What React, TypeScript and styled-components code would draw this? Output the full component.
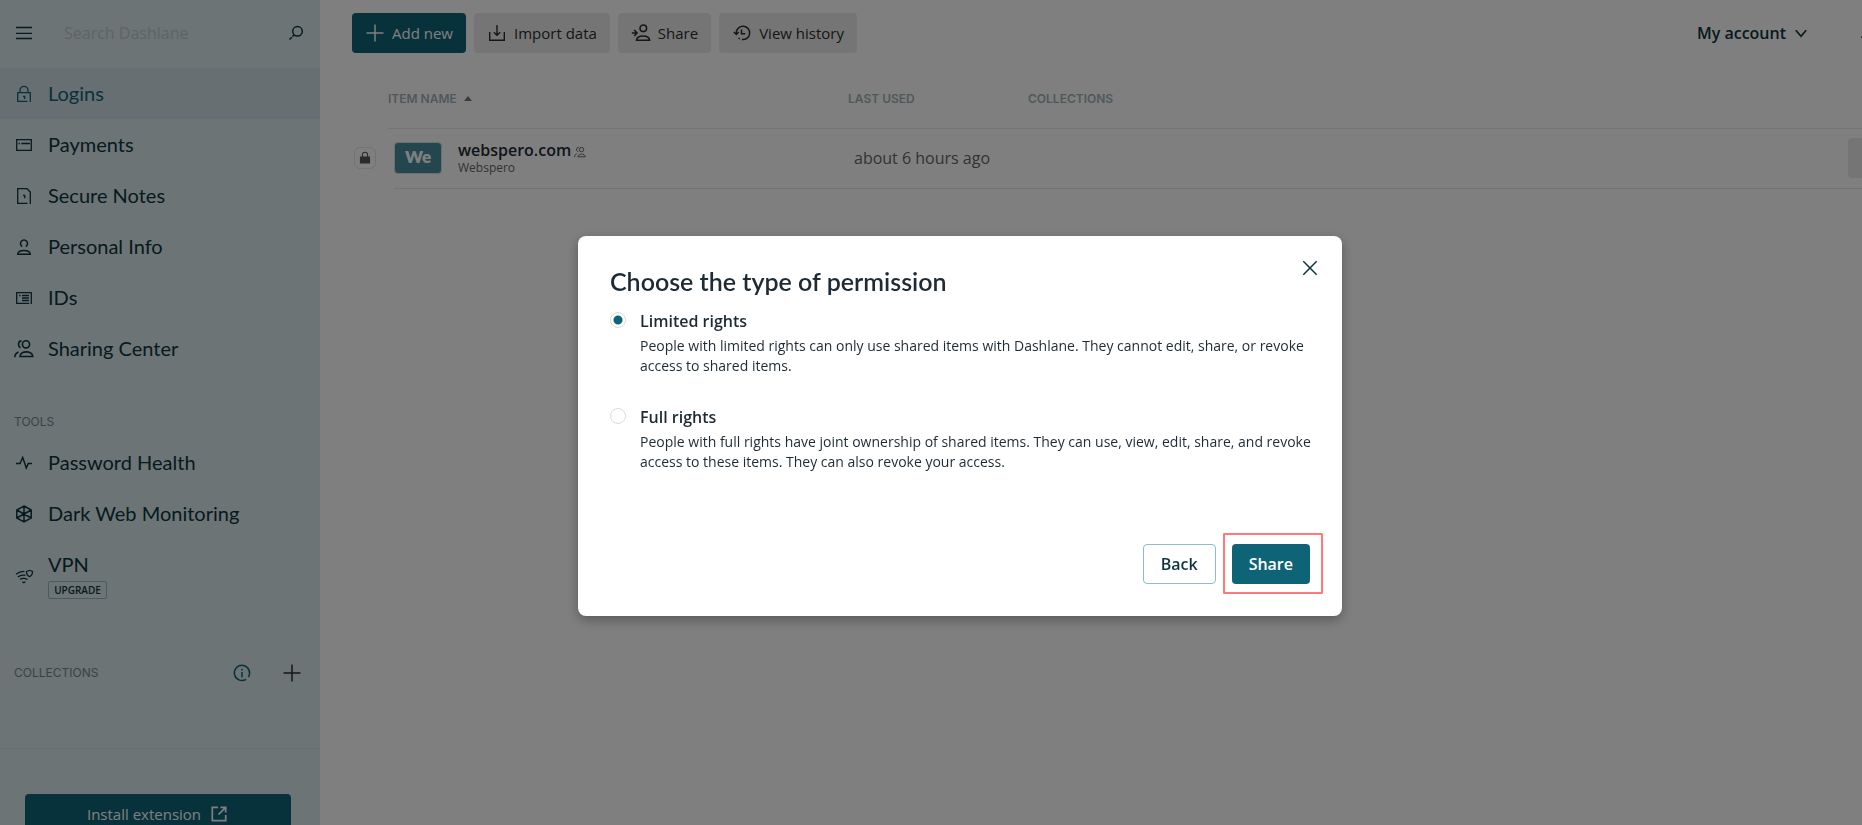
import React, { useState } from "react";
import styled, { createGlobalStyle, css } from "styled-components";

const body = '"Open Sans", "Noto Sans", sans-serif';
const display = 'Lato, "Open Sans", sans-serif';
const caps = 'Inter, "Liberation Sans", sans-serif';

const Global = createGlobalStyle`
  *, *::before, *::after { box-sizing: border-box; }
  html, body { margin: 0; height: 100%; overflow: hidden; }
  body { font-family: ${body}; color: #1e2b34; background: #fff; }
  button, input { font-family: inherit; margin: 0; }
  h2, p, ul { margin: 0; padding: 0; }
`;

/* The app canvas is slightly larger than the window and is clipped by it. */
const Shell = styled.div`
  display: flex;
  width: calc(100vw + 58px);
  min-height: calc(100vh + 27px);
`;

const Sidebar = styled.aside`
  flex: 0 0 320px;
  display: flex;
  flex-direction: column;
  background: #d8e8ea;
  color: #0e353d;
`;

const IconButton = styled.button`
  display: inline-flex;
  align-items: center;
  justify-content: center;
  width: 20px;
  height: 20px;
  padding: 0;
  border: 0;
  background: none;
  color: inherit;
  cursor: pointer;
`;

const InfoButton = styled(IconButton)`
  color: #0e6476;
`;

const SearchBar = styled.div`
  display: flex;
  align-items: center;
  height: 68px;
  padding: 0 14px 2px;
`;

const SearchInput = styled.input`
  flex: 1;
  min-width: 0;
  margin: 0 8px 0 30px;
  padding: 0;
  border: 0;
  outline: 0;
  background: none;
  font-size: 16px;
  line-height: 24px;
  color: #0e353d;
  &::placeholder { color: #bac8ca; opacity: 1; }
`;

const NavList = styled.ul`
  list-style: none;
`;

const NavLink = styled.a<{ $active?: boolean }>`
  display: flex;
  align-items: center;
  gap: 14px;
  min-height: 51px;
  padding: 13px 14px;
  font-family: ${display};
  font-size: 20px;
  line-height: 25px;
  text-decoration: none;
  color: ${(p) => (p.$active ? "#0e6476" : "#0e353d")};
  background: ${(p) => (p.$active ? "#cfdfe4" : "transparent")};
  svg { flex: none; }
`;

const Upgrade = styled.span`
  display: block;
  width: 59px;
  margin-top: 4px;
  border: 1px solid #8fb9bd;
  border-radius: 2px;
  font-family: ${body};
  font-size: 10px;
  font-weight: 600;
  line-height: 16px;
  text-align: center;
`;

const SectionTitle = styled.div`
  font-family: ${caps};
  font-size: 12px;
  line-height: 16px;
  color: #71878b;
`;

const ToolsTitle = styled(SectionTitle)`
  padding: 40px 14px 7px;
`;

const CollectionsHead = styled.div`
  display: flex;
  align-items: center;
  gap: 30px;
  height: 24px;
  margin: 49px 18px 63px 14px;
  color: #2d2d2d;
  ${SectionTitle} { flex: 1; }
`;

const SidebarFooter = styled.div`
  border-top: 1px solid #cfe0e3;
  padding: 45px 29px 18px 25px;
`;

const Button = styled.button<{ $kind: "primary" | "quiet" | "outline" }>`
  display: inline-flex;
  align-items: center;
  justify-content: center;
  height: 40px;
  gap: 7px;
  padding: 0 13px;
  border: 0;
  border-radius: 4px;
  font-size: 15px;
  font-weight: 500;
  line-height: 20px;
  white-space: nowrap;
  cursor: pointer;
  ${(p) => p.$kind === "primary" && css`background: #0e6476; color: #fff;`}
  ${(p) => p.$kind === "quiet" && css`background: #ebebeb; color: #2d2d2d;`}
  ${(p) => p.$kind === "outline" && css`background: #fff; color: #0e353d; border: 1px solid #92bcc5;`}
`;

const InstallButton = styled(Button)`
  width: 100%;
  gap: 8px;
`;

const DialogButton = styled(Button)`
  font-size: 16px;
  font-weight: 600;
  padding: 0 17px;
`;

const Main = styled.main`
  flex: 1;
  min-width: 0;
  padding: 13px 32px 0;
`;

const Toolbar = styled.div`
  display: flex;
  gap: 8px;
  align-items: center;
`;

const Account = styled.button`
  display: flex;
  align-items: center;
  gap: 5px;
  margin-left: auto;
  padding: 0;
  border: 0;
  background: none;
  font-size: 16px;
  font-weight: 600;
  line-height: 24px;
  color: #0e353d;
`;

const Bell = styled(IconButton)`
  margin: 0 7px 0 42px;
  color: #0e353d;
`;

const Table = styled.table`
  width: 100%;
  margin-top: 37px;
  border-collapse: collapse;
  table-layout: fixed;
`;

const Th = styled.th<{ $bare?: boolean }>`
  height: 38px;
  padding: 0 0 20px;
  text-align: left;
  vertical-align: middle;
  font-family: ${caps};
  font-size: 12px;
  font-weight: 600;
  line-height: 16px;
  color: #9fb1b5;
  border-bottom: ${(p) => (p.$bare ? "0" : "1px solid #e6e6e6")};
  svg { margin-left: 7px; vertical-align: 2px; color: #777; }
`;

const Td = styled.td<{ $bare?: boolean }>`
  height: 60px;
  padding: 0;
  vertical-align: middle;
  font-size: 16px;
  color: #666;
  border-bottom: ${(p) => (p.$bare ? "0" : "1px solid #e6e6e6")};
`;

const Used = styled.span`
  padding-left: 6px;
`;

const LockBox = styled.span`
  display: flex;
  align-items: center;
  justify-content: center;
  width: 22px;
  height: 22px;
  margin-left: 2px;
  border: 1px solid #e6e6e6;
  border-radius: 6px;
  color: #555;
`;

const Item = styled.div`
  display: flex;
  align-items: center;
  gap: 16px;
`;

const ItemText = styled.div`
  padding-top: 2px;
`;

const Thumb = styled.div`
  width: 48px;
  height: 32px;
  border: 1px solid #dcdcdc;
  border-radius: 4px;
  background: #488e9e;
  color: #fff;
  font-family: ${display};
  font-size: 17px;
  font-weight: 800;
  line-height: 28px;
  text-align: center;
`;

const ItemName = styled.div`
  display: flex;
  align-items: center;
  gap: 3px;
  font-size: 16px;
  font-weight: 600;
  line-height: 18px;
  color: #1e2b34;
  svg { margin-top: 4px; color: #555; }
`;

const ItemSub = styled.div`
  font-size: 12px;
  line-height: 18px;
  color: #666;
`;

const RowAction = styled.button`
  display: block;
  width: 40px;
  height: 40px;
  border: 0;
  border-radius: 4px;
  background: #ebebeb;
`;

const Overlay = styled.div`
  position: fixed;
  inset: 0 -58px -27px 0;
  display: flex;
  align-items: center;
  justify-content: center;
  background: rgba(0, 0, 0, 0.5);
`;

const Dialog = styled.section`
  position: relative;
  width: 764px;
  padding: 32px;
  border-radius: 8px;
  background: #fff;
  box-shadow: 0 4px 12px rgba(0, 0, 0, 0.3);
`;

const Close = styled(IconButton)`
  position: absolute;
  top: 22px;
  right: 22px;
  color: #0e353d;
`;

const Title = styled.h2`
  margin-bottom: 15px;
  font-family: ${display};
  font-size: 25px;
  font-weight: 600;
  line-height: 26px;
`;

const Options = styled.form`
  display: grid;
  gap: 29px;
  margin-right: -16px;
`;

const Option = styled.div`
  display: grid;
  grid-template-columns: 16px 1fr;
  column-gap: 14px;
  row-gap: 3px;
`;

const Radio = styled.input`
  appearance: none;
  width: 16px;
  height: 16px;
  margin: 3px 0 0;
  border: 1px solid #d5dfe0;
  border-radius: 50%;
  background: #fff;
  &:checked { background: radial-gradient(circle, #0e6476 0 4px, #fff 5px); }
`;

const OptionLabel = styled.label`
  font-size: 16px;
  font-weight: 600;
  line-height: 24px;
`;

const OptionText = styled.p`
  grid-column: 2;
  font-size: 14px;
  line-height: 20px;
`;

const Actions = styled.div`
  display: flex;
  justify-content: flex-end;
  gap: 16px;
  margin-top: 72px;
`;

const Highlighted = styled.div`
  position: relative;
  &::after {
    content: "";
    position: absolute;
    inset: -11px -13px -10px -9px;
    border: 2px solid #ff7b7b;
    border-radius: 1px;
    pointer-events: none;
  }
`;

const Svg = ({ size = 20, w = 1.5, children }: { size?: number; w?: number; children: React.ReactNode }) => (
  <svg width={size} height={size} viewBox="0 0 20 20" fill="none" stroke="currentColor" strokeWidth={w} aria-hidden="true">
    {children}
  </svg>
);

const icons = {
  menu: <Svg><path d="M2 4.5h16M2 10.3h16M2 15.5h16" strokeWidth="1.3" /></Svg>,
  search: <Svg><circle cx="11.5" cy="8.3" r="4.8" /><path d="M8 12l-1.600 1.600M5.800 14.200l-2.300 2.300" /></Svg>,
  lock: <Svg w={1.3}><path d="M16.300 18V8.700H3.700v8.600h9.800M6 8.500V6.300a4 4 0 0 1 8 0v2.200" /><path d="M9 12.500h1.700v2.500" /></Svg>,
  card: <Svg w={1.3}><path d="M2.700 4.700h14.600v10.600H2.700zM4.500 8.500h1.300M7.300 8.500h8.700" /></Svg>,
  note: <Svg w={1.3}><path d="M16.300 18V6l-3.300-3.300H3.700v14.600h9.800" /><path d="M9 9.300h1.700v3" /></Svg>,
  person: <Svg><path d="M8.200 9.500a3.500 3.500 0 1 1 3.600 0M3.700 17.300c.5-5 12-5 12.600 0z" /></Svg>,
  id: <Svg w={1.3}><path d="M17.300 16V4.700H2.700v10.600h12.500M5 7.500h1.500M8 7.500h7M8 10h7M8 12.500h7" /></Svg>,
  people: <Svg w={1.6}><circle cx="12" cy="5.300" r="3.600" /><path d="M6 17.500c.3-6.200 12.300-6.200 12.800 0zM7.500 1.900C3.800 2 3.800 7.500 6.500 8.700M.8 18.300c.1-2.800 1.200-4.300 3.700-5.300" /></Svg>,
  pulse: <Svg><path d="M2 10.500h4l2.700-6 3.600 10.500 2-4.500H18" /></Svg>,
  web: <Svg><path d="M10 2l7.200 4v8L10 18l-7.200-4V6zM10 2v16M2.800 6l14.400 8M17.200 6L2.800 14" /><circle cx="10" cy="10" r="1" /></Svg>,
  vpn: <Svg w={1.2}><path d="M2 8.300c2.500-2 5.500-3 8.500-2.800M3.700 11c2.300-1.700 5-2.300 7.800-1.600M6 13.300c2-1.200 5-1.300 7.500.2M8.300 15.800l1.500 1 1.600-1M12.500 5.500L15.500 4.300l3 1.200c.1 2.500-1 4.300-3 5.200-2-.9-3.100-2.700-3-5.200z" /></Svg>,
  info: <Svg><path d="M14 16.400A7.600 7.600 0 1 1 16.400 14M10 9v5.200M10 5.800v1.600" /></Svg>,
  plus: <Svg><path d="M10 1.500v17M1.500 10h17" /></Svg>,
  external: <Svg w={1.7}><path d="M9 3.300H3.300v13.400h13.400V11M11.500 3.300h5.200v5.200M16.700 3.300L9.500 10.500" /></Svg>,
  download: <Svg w={1.4}><path d="M2.700 9v8.300h14.600V9M10 2v10M6.800 9.300L10 12.300l3.200-3" /></Svg>,
  share: <Svg w={1.6}><circle cx="12.300" cy="5.300" r="3.300" /><path d="M5.500 17.300c.5-5.700 12.600-5.700 13.100 0zM.8 10h5M3.300 7L6 10l-2.700 3" /></Svg>,
  history: <Svg w={1.5}><path d="M4.300 11V9.500a6.700 6.700 0 1 1 5.500 7M1.800 9l2.500 2.500L6.800 9M9.500 6.500v4.200h3.800M7.800 16L6.500 15" /></Svg>,
  bell: <Svg><path d="M1 14h17l-2.500-3V7a5.500 5.500 0 0 0-11 0v4zM7.500 17h5" /></Svg>,
  close: <Svg><path d="M3.300 3.300l13.400 13.400M16.700 3.300L3.300 16.700" /></Svg>,
  chevron: <Svg w={1.7}><path d="M4.800 7.300l5.200 6 5.200-6" /></Svg>,
  padlock: <Svg size={14}><path d="M6.300 9V5.500a3.700 3.700 0 0 1 7.400 0V9" /><path d="M3.500 8.500h13V17h-13z" fill="currentColor" /></Svg>,
  shared: <Svg size={12} w={1.5}><circle cx="12.500" cy="6" r="3.700" /><path d="M6.500 18c.3-6 12-6 12.300 0zM8 2C3 2 3 8.500 7 9.500M1 18.500c0-3 1-4.500 3.500-5.500" /></Svg>,
};

const mainNav: [string, React.ReactNode][] = [
  ["Logins", icons.lock],
  ["Payments", icons.card],
  ["Secure Notes", icons.note],
  ["Personal Info", icons.person],
  ["IDs", icons.id],
  ["Sharing Center", icons.people],
];

const permissions = [
  {
    id: "limited",
    label: "Limited rights",
    text: "People with limited rights can only use shared items with Dashlane. They cannot edit, share, or revoke access to shared items.",
  },
  {
    id: "full",
    label: "Full rights",
    text: "People with full rights have joint ownership of shared items. They can use, view, edit, share, and revoke access to these items. They can also revoke your access.",
  },
];

export default function App() {
  const [permission, setPermission] = useState("limited");
  return (
    <>
      <Global />
      <Shell>
        <Sidebar>
          <SearchBar>
            <IconButton aria-label="Menu">{icons.menu}</IconButton>
            <SearchInput type="text" placeholder="Search Dashlane" aria-label="Search Dashlane" />
            <IconButton aria-label="Search">{icons.search}</IconButton>
          </SearchBar>
          <nav>
            <NavList>
              {mainNav.map(([label, icon], i) => (
                <li key={label}>
                  <NavLink href="#" $active={i === 0}>{icon}{label}</NavLink>
                </li>
              ))}
            </NavList>
            <ToolsTitle>TOOLS</ToolsTitle>
            <NavList>
              <li><NavLink href="#">{icons.pulse}Password Health</NavLink></li>
              <li><NavLink href="#">{icons.web}Dark Web Monitoring</NavLink></li>
              <li>
                <NavLink href="#">
                  {icons.vpn}
                  <span>VPN<Upgrade>UPGRADE</Upgrade></span>
                </NavLink>
              </li>
            </NavList>
          </nav>
          <CollectionsHead>
            <SectionTitle>COLLECTIONS</SectionTitle>
            <InfoButton aria-label="About collections">{icons.info}</InfoButton>
            <IconButton aria-label="Add collection">{icons.plus}</IconButton>
          </CollectionsHead>
          <SidebarFooter>
            <InstallButton $kind="primary">Install extension {icons.external}</InstallButton>
          </SidebarFooter>
        </Sidebar>
        <Main>
          <Toolbar>
            <Button $kind="primary">{icons.plus}Add new</Button>
            <Button $kind="quiet">{icons.download}Import data</Button>
            <Button $kind="quiet">{icons.share}Share</Button>
            <Button $kind="quiet">{icons.history}View history</Button>
            <Account>My account{icons.chevron}</Account>
            <Bell aria-label="Notifications">{icons.bell}</Bell>
          </Toolbar>
          <Table>
            <colgroup>
              <col style={{ width: 36 }} />
              <col style={{ width: 6 }} />
              <col style={{ width: 454 }} />
              <col style={{ width: 180 }} />
              <col />
              <col style={{ width: 40 }} />
            </colgroup>
            <thead>
              <tr>
                <Th $bare />
                <Th colSpan={2}>
                  ITEM NAME
                  <svg width="8" height="5" viewBox="0 0 8 5" fill="currentColor" aria-hidden="true"><path d="M0 5L4 0l4 5z" /></svg>
                </Th>
                <Th>LAST USED</Th>
                <Th colSpan={2}>COLLECTIONS</Th>
              </tr>
            </thead>
            <tbody>
              <tr>
                <Td $bare><LockBox>{icons.padlock}</LockBox></Td>
                <Td $bare />
                <Td>
                  <Item>
                    <Thumb>We</Thumb>
                    <ItemText>
                      <ItemName>webspero.com{icons.shared}</ItemName>
                      <ItemSub>Webspero</ItemSub>
                    </ItemText>
                  </Item>
                </Td>
                <Td><Used>about 6 hours ago</Used></Td>
                <Td />
                <Td><RowAction aria-label="Item actions" /></Td>
              </tr>
            </tbody>
          </Table>
        </Main>
      </Shell>
      <Overlay>
        <Dialog role="dialog" aria-modal="true" aria-labelledby="permission-title">
          <Close aria-label="Close">{icons.close}</Close>
          <Title id="permission-title">Choose the type of permission</Title>
          <Options>
            {permissions.map((p) => (
              <Option key={p.id}>
                <Radio
                  type="radio"
                  name="permission"
                  id={p.id}
                  checked={permission === p.id}
                  onChange={() => setPermission(p.id)}
                />
                <OptionLabel htmlFor={p.id}>{p.label}</OptionLabel>
                <OptionText>{p.text}</OptionText>
              </Option>
            ))}
          </Options>
          <Actions>
            <DialogButton $kind="outline">Back</DialogButton>
            <Highlighted>
              <DialogButton $kind="primary">Share</DialogButton>
            </Highlighted>
          </Actions>
        </Dialog>
      </Overlay>
    </>
  );
}
